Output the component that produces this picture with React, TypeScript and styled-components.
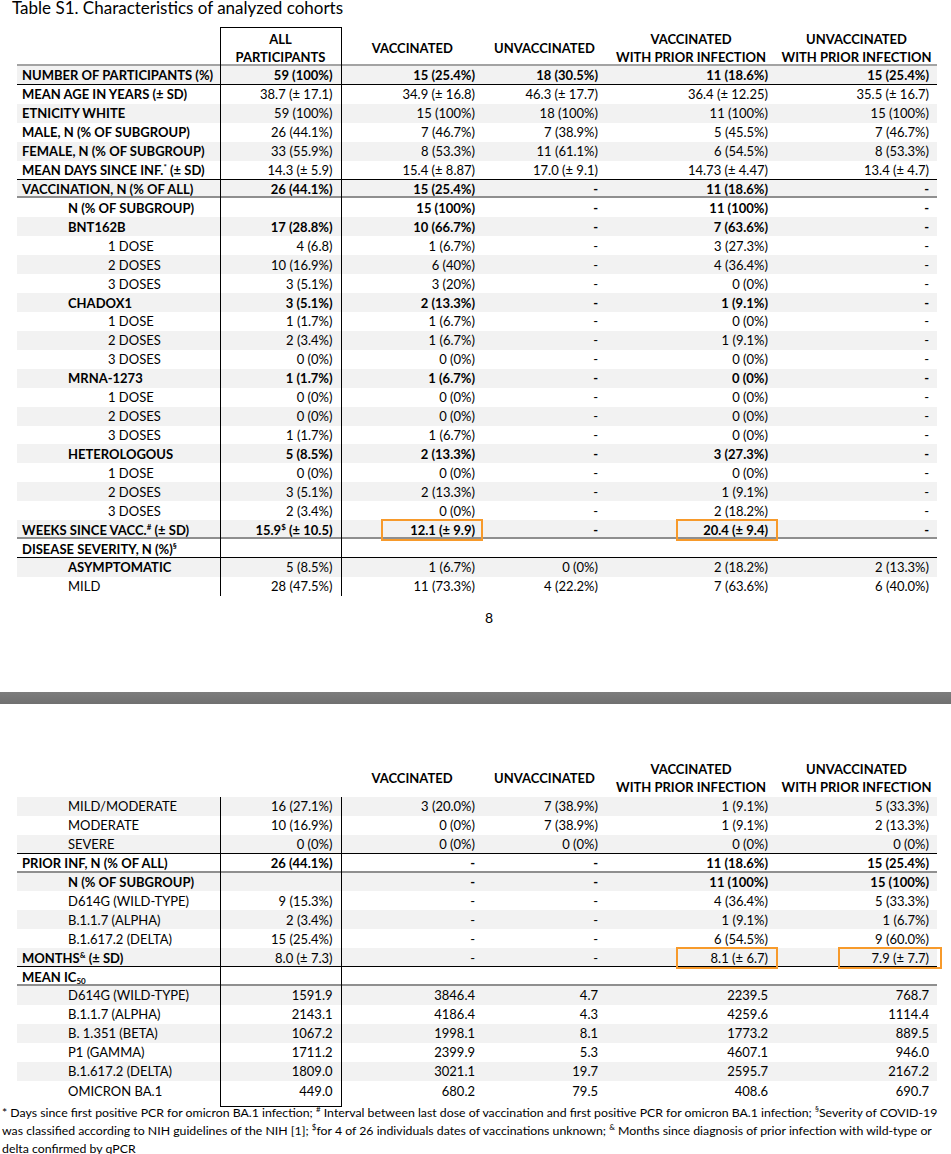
import { ReactNode } from "react"
import styled, { createGlobalStyle, css } from "styled-components"

type Rule = "black" | "gray"

type Row = {
  label: ReactNode
  level: 0 | 1 | 2
  strong?: boolean
  strongValues?: boolean
  rule?: Rule
  cells: ReactNode[]
}

const GlobalStyle = createGlobalStyle`
  body {
    margin: 0;
    background: #ffffff;
    color: #000000;
    font-family: Lato, "Open Sans", sans-serif;
  }
`

// rules are drawn as inset shadows so they don't add to the row height
const ruled = (rule?: Rule) =>
  rule === "black"
    ? css`box-shadow: inset 0 -1px 0 #000;`
    : rule === "gray"
      ? css`box-shadow: inset 0 -2px 0 #8f8f8f;`
      : css``

const Page = styled.div`
  width: 951px;
  display: flex;
  flex-direction: column;
`

const Title = styled.div`
  padding-left: 12px;
  height: 20px;
  font-size: 17px;
  line-height: 16px;
`

const DataTable = styled.table<{ $top: number }>`
  margin: ${(p) => p.$top}px 0 0 17px;
  width: 920px;
  border-collapse: collapse;
  table-layout: fixed;
  font-size: 13px;
`

const HeadCell = styled.th<{ $box?: boolean; $rule?: boolean; $lift: number }>`
  font-weight: 700;
  text-align: center;
  line-height: 18px;
  height: 37px;
  padding: ${(p) => p.$lift}px 0 0;
  box-sizing: border-box;
  vertical-align: middle;
  ${(p) => p.$rule && css`box-shadow: inset 0 -2px 0 #a3a3a3;`}
  ${(p) =>
    p.$box &&
    css`
      border-top: 1px solid #000;
      border-left: 1px solid #000;
      border-right: 1px solid #000;
    `}
`

const BodyRow = styled.tr<{ $shade: boolean }>`
  background: ${(p) => (p.$shade ? "#f2f2f2" : "#ffffff")};
`

const cellBase = css<{ $tall?: boolean }>`
  height: ${(p) => (p.$tall ? "25px" : "18.93px")};
  vertical-align: ${(p) => (p.$tall ? "top" : "middle")};
  line-height: 18px;
  white-space: nowrap;
`

const LabelCell = styled.td<{ $level: number; $strong?: boolean; $rule?: Rule; $tall?: boolean }>`
  ${cellBase}
  padding: ${(p) => (p.$tall ? 1 : 0)}px 0 0 ${(p) => [5, 51, 91][p.$level]}px;
  font-weight: ${(p) => (p.$strong ? 700 : 400)};
  ${(p) => ruled(p.$rule)}
`

const ValueCell = styled.td<{ $strong?: boolean; $box?: boolean; $close?: boolean; $rule?: Rule; $tall?: boolean }>`
  ${cellBase}
  padding: ${(p) => (p.$tall ? 1 : 0)}px 8px 0 0;
  text-align: right;
  font-weight: ${(p) => (p.$strong ? 700 : 400)};
  ${(p) => ruled(p.$rule)}
  ${(p) =>
    p.$box &&
    css`
      border-left: 1px solid #000;
      border-right: 1px solid #000;
    `}
  ${(p) =>
    p.$close &&
    css`
      box-shadow: inset 0 -1px 0 #000;
    `}
`

const Mark = styled.span<{ $right: number; $width: number }>`
  position: relative;
  &::after {
    content: "";
    position: absolute;
    top: -3px;
    bottom: -3px;
    right: -${(p) => p.$right}px;
    width: ${(p) => p.$width}px;
    border: 2px solid #f79a2b;
    box-sizing: border-box;
  }
`

const Sup = styled.sup`
  font-size: 8px;
  line-height: 0;
  vertical-align: 5px;
`

const Sub = styled.sub`
  font-size: 8px;
  line-height: 0;
  vertical-align: -2px;
`

const PageNumber = styled.div`
  margin-top: 13px;
  padding-left: 27px;
  text-align: center;
  font-size: 14px;
  line-height: 18px;
`

const PageGap = styled.div`
  margin-top: 65px;
  height: 12px;
  background: linear-gradient(#7d7d7d, #707070);
`

const Footnote = styled.div`
  margin-top: -3px;
  padding-left: 2px;
  font-size: 12.3px;
  line-height: 18px;
  white-space: nowrap;
`

const heads: ReactNode[] = [
  "VACCINATED",
  "UNVACCINATED",
  <>VACCINATED<br />WITH PRIOR INFECTION</>,
  <>UNVACCINATED<br />WITH PRIOR INFECTION</>,
]

const firstRows: Row[] = [
  { label: "NUMBER OF PARTICIPANTS (%)", level: 0, strong: true, strongValues: true, rule: "black", cells: ["59 (100%)", "15 (25.4%)", "18 (30.5%)", "11 (18.6%)", "15 (25.4%)"] },
  { label: "MEAN AGE IN YEARS (± SD)", level: 0, strong: true, cells: ["38.7 (± 17.1)", "34.9 (± 16.8)", "46.3 (± 17.7)", "36.4 (± 12.25)", "35.5 (± 16.7)"] },
  { label: "ETNICITY WHITE", level: 0, strong: true, cells: ["59 (100%)", "15 (100%)", "18 (100%)", "11 (100%)", "15 (100%)"] },
  { label: "MALE, N (% OF SUBGROUP)", level: 0, strong: true, cells: ["26 (44.1%)", "7 (46.7%)", "7 (38.9%)", "5 (45.5%)", "7 (46.7%)"] },
  { label: "FEMALE, N (% OF SUBGROUP)", level: 0, strong: true, cells: ["33 (55.9%)", "8 (53.3%)", "11 (61.1%)", "6 (54.5%)", "8 (53.3%)"] },
  { label: <>MEAN DAYS SINCE INF.<Sup>*</Sup> (± SD)</>, level: 0, strong: true, rule: "black", cells: ["14.3 (± 5.9)", "15.4 (± 8.87)", "17.0 (± 9.1)", "14.73 (± 4.47)", "13.4 (± 4.7)"] },
  { label: "VACCINATION, N (% OF ALL)", level: 0, strong: true, strongValues: true, rule: "gray", cells: ["26 (44.1%)", "15 (25.4%)", "-", "11 (18.6%)", "-"] },
  { label: "N (% OF SUBGROUP)", level: 1, strong: true, strongValues: true, cells: ["", "15 (100%)", "-", "11 (100%)", "-"] },
  { label: "BNT162B", level: 1, strong: true, strongValues: true, cells: ["17 (28.8%)", "10 (66.7%)", "-", "7 (63.6%)", "-"] },
  { label: "1 DOSE", level: 2, cells: ["4 (6.8)", "1 (6.7%)", "-", "3 (27.3%)", "-"] },
  { label: "2 DOSES", level: 2, cells: ["10 (16.9%)", "6 (40%)", "-", "4 (36.4%)", "-"] },
  { label: "3 DOSES", level: 2, cells: ["3 (5.1%)", "3 (20%)", "-", "0 (0%)", "-"] },
  { label: "CHADOX1", level: 1, strong: true, strongValues: true, cells: ["3 (5.1%)", "2 (13.3%)", "-", "1 (9.1%)", "-"] },
  { label: "1 DOSE", level: 2, cells: ["1 (1.7%)", "1 (6.7%)", "-", "0 (0%)", "-"] },
  { label: "2 DOSES", level: 2, cells: ["2 (3.4%)", "1 (6.7%)", "-", "1 (9.1%)", "-"] },
  { label: "3 DOSES", level: 2, cells: ["0 (0%)", "0 (0%)", "-", "0 (0%)", "-"] },
  { label: "MRNA-1273", level: 1, strong: true, strongValues: true, cells: ["1 (1.7%)", "1 (6.7%)", "-", "0 (0%)", "-"] },
  { label: "1 DOSE", level: 2, cells: ["0 (0%)", "0 (0%)", "-", "0 (0%)", "-"] },
  { label: "2 DOSES", level: 2, cells: ["0 (0%)", "0 (0%)", "-", "0 (0%)", "-"] },
  { label: "3 DOSES", level: 2, cells: ["1 (1.7%)", "1 (6.7%)", "-", "0 (0%)", "-"] },
  { label: "HETEROLOGOUS", level: 1, strong: true, strongValues: true, cells: ["5 (8.5%)", "2 (13.3%)", "-", "3 (27.3%)", "-"] },
  { label: "1 DOSE", level: 2, cells: ["0 (0%)", "0 (0%)", "-", "0 (0%)", "-"] },
  { label: "2 DOSES", level: 2, cells: ["3 (5.1%)", "2 (13.3%)", "-", "1 (9.1%)", "-"] },
  { label: "3 DOSES", level: 2, cells: ["2 (3.4%)", "0 (0%)", "-", "2 (18.2%)", "-"] },
  {
    label: <>WEEKS SINCE VACC.<Sup>#</Sup> (± SD)</>,
    level: 0,
    strong: true,
    strongValues: true,
    rule: "gray",
    cells: [
      <>15.9<Sup>$</Sup> (± 10.5)</>,
      <Mark $right={8} $width={102}>12.1 (± 9.9)</Mark>,
      "-",
      <Mark $right={10} $width={102}>20.4 (± 9.4)</Mark>,
      "-",
    ],
  },
  { label: <>DISEASE SEVERITY, N (%)<Sup>§</Sup></>, level: 0, strong: true, rule: "black", cells: ["", "", "", "", ""] },
  { label: "ASYMPTOMATIC", level: 1, strong: true, cells: ["5 (8.5%)", "1 (6.7%)", "0 (0%)", "2 (18.2%)", "2 (13.3%)"] },
  { label: "MILD", level: 1, cells: ["28 (47.5%)", "11 (73.3%)", "4 (22.2%)", "7 (63.6%)", "6 (40.0%)"] },
]

const secondRows: Row[] = [
  { label: "MILD/MODERATE", level: 1, cells: ["16 (27.1%)", "3 (20.0%)", "7 (38.9%)", "1 (9.1%)", "5 (33.3%)"] },
  { label: "MODERATE", level: 1, cells: ["10 (16.9%)", "0 (0%)", "7 (38.9%)", "1 (9.1%)", "2 (13.3%)"] },
  { label: "SEVERE", level: 1, rule: "black", cells: ["0 (0%)", "0 (0%)", "0 (0%)", "0 (0%)", "0 (0%)"] },
  { label: "PRIOR INF, N (% OF ALL)", level: 0, strong: true, strongValues: true, rule: "gray", cells: ["26 (44.1%)", "-", "-", "11 (18.6%)", "15 (25.4%)"] },
  { label: "N (% OF SUBGROUP)", level: 1, strong: true, strongValues: true, cells: ["", "-", "-", "11 (100%)", "15 (100%)"] },
  { label: "D614G (WILD-TYPE)", level: 1, cells: ["9 (15.3%)", "-", "-", "4 (36.4%)", "5 (33.3%)"] },
  { label: "B.1.1.7 (ALPHA)", level: 1, cells: ["2 (3.4%)", "-", "-", "1 (9.1%)", "1 (6.7%)"] },
  { label: "B.1.617.2 (DELTA)", level: 1, cells: ["15 (25.4%)", "-", "-", "6 (54.5%)", "9 (60.0%)"] },
  {
    label: <>MONTHS<Sup>&amp;</Sup> (± SD)</>,
    level: 0,
    strong: true,
    rule: "black",
    cells: [
      "8.0 (± 7.3)",
      "-",
      "-",
      <Mark $right={10} $width={102}>8.1 (± 6.7)</Mark>,
      <Mark $right={13} $width={104}>7.9 (± 7.7)</Mark>,
    ],
  },
  { label: <>MEAN IC<Sub>50</Sub></>, level: 0, strong: true, rule: "gray", cells: ["", "", "", "", ""] },
  { label: "D614G (WILD-TYPE)", level: 1, cells: ["1591.9", "3846.4", "4.7", "2239.5", "768.7"] },
  { label: "B.1.1.7 (ALPHA)", level: 1, cells: ["2143.1", "4186.4", "4.3", "4259.6", "1114.4"] },
  { label: "B. 1.351 (BETA)", level: 1, cells: ["1067.2", "1998.1", "8.1", "1773.2", "889.5"] },
  { label: "P1 (GAMMA)", level: 1, cells: ["1711.2", "2399.9", "5.3", "4607.1", "946.0"] },
  { label: "B.1.617.2 (DELTA)", level: 1, cells: ["1809.0", "3021.1", "19.7", "2595.7", "2167.2"] },
  { label: "OMICRON BA.1", level: 1, cells: ["449.0", "680.2", "79.5", "408.6", "690.7"] },
]

const Columns = () => (
  <colgroup>
    <col style={{ width: 203 }} />
    <col style={{ width: 121 }} />
    <col style={{ width: 142 }} />
    <col style={{ width: 123 }} />
    <col style={{ width: 170 }} />
    <col style={{ width: 161 }} />
  </colgroup>
)

type TableProps = {
  top: number
  rows: Row[]
  showAll: boolean
  closeBox?: boolean
}

const CohortTable = ({ top, rows, showAll, closeBox }: TableProps) => {
  const lift = showAll ? 2 : 0
  return (
    <DataTable $top={top}>
      <Columns />
      <thead>
        <tr>
          <HeadCell $lift={lift} $rule={showAll} />
          <HeadCell $lift={lift} $rule={showAll} $box={showAll}>
            {showAll && <>ALL<br />PARTICIPANTS</>}
          </HeadCell>
          {heads.map((h, i) => (
            <HeadCell key={i} $lift={lift} $rule={showAll}>{h}</HeadCell>
          ))}
        </tr>
      </thead>
      <tbody>
        {rows.map((r, i) => {
          const last = !!closeBox && i === rows.length - 1
          return (
            <BodyRow key={i} $shade={i % 2 === 0}>
              <LabelCell $level={r.level} $strong={r.strong} $rule={r.rule} $tall={last}>
                {r.label}
              </LabelCell>
              {r.cells.map((c, j) => (
                <ValueCell
                  key={j}
                  $strong={r.strongValues}
                  $rule={r.rule}
                  $box={j === 0}
                  $close={last && j === 0}
                  $tall={last}
                >
                  {c}
                </ValueCell>
              ))}
            </BodyRow>
          )
        })}
      </tbody>
    </DataTable>
  )
}

export default function App() {
  return (
    <Page>
      <GlobalStyle />
      <Title>Table S1. Characteristics of analyzed cohorts</Title>
      <CohortTable top={7} rows={firstRows} showAll />
      <PageNumber>8</PageNumber>
      <PageGap />
      <CohortTable top={56} rows={secondRows} showAll={false} closeBox />
      <Footnote>
        * Days since first positive PCR for omicron BA.1 infection; <Sup>#</Sup> Interval between last dose of
        vaccination and first positive PCR for omicron BA.1 infection; <Sup>§</Sup>Severity of COVID-19
        <br />
        was classified according to NIH guidelines of the NIH [1]; <Sup>$</Sup>for 4 of 26 individuals dates of
        vaccinations unknown; <Sup>&amp;</Sup> Months since diagnosis of prior infection with wild-type or
        <br />
        delta confirmed by qPCR
      </Footnote>
    </Page>
  )
}
